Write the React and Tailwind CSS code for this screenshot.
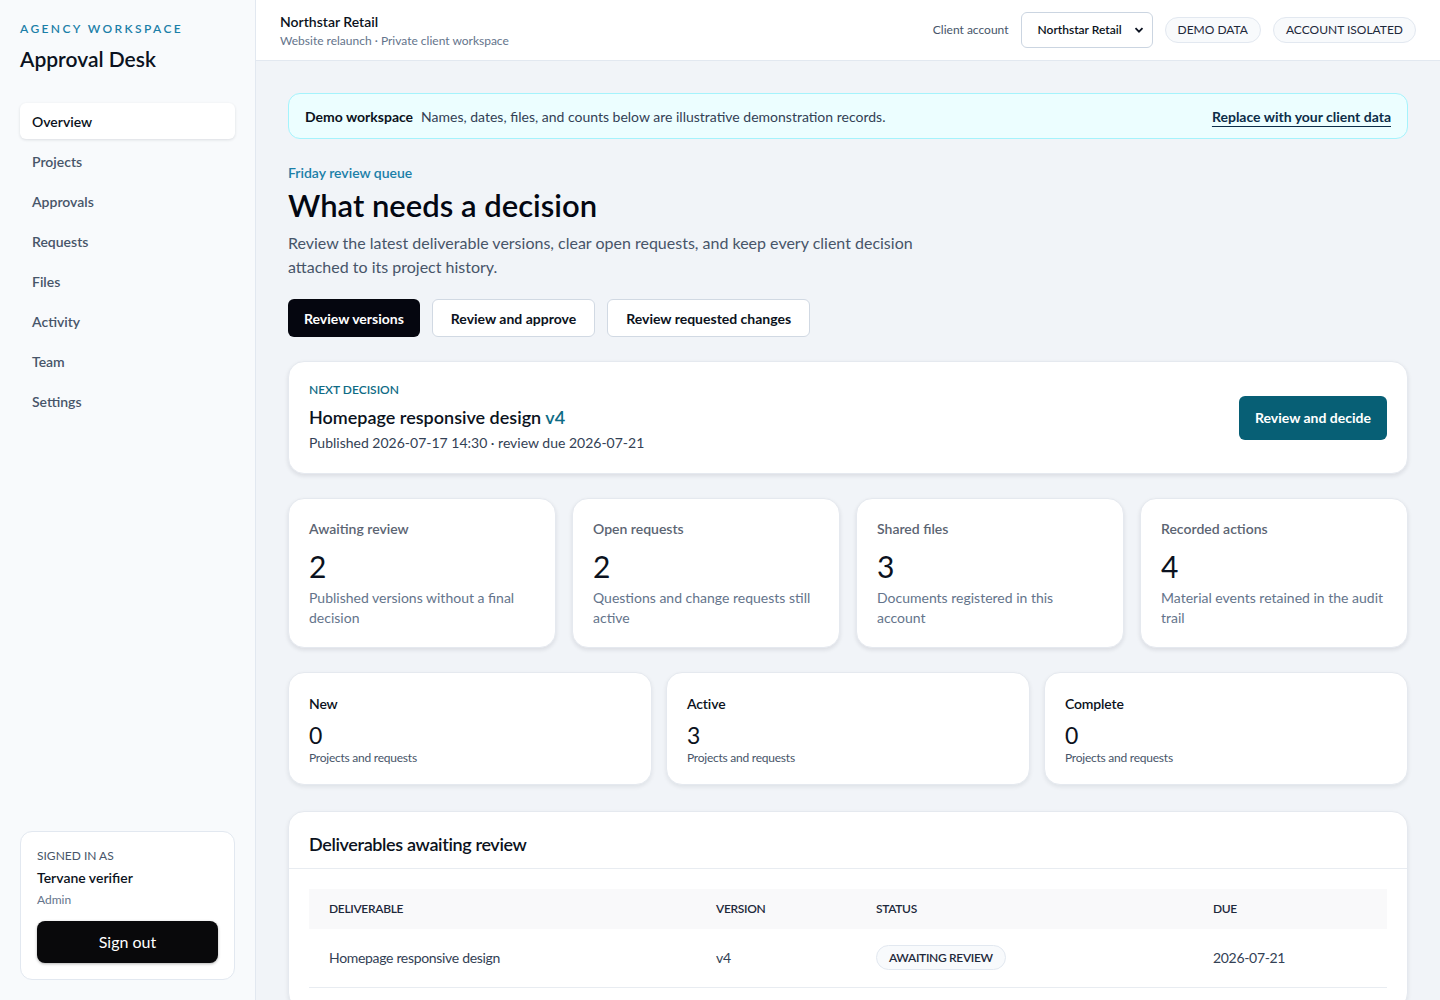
import React from 'react';

const navItems = ['Overview', 'Projects', 'Approvals', 'Requests', 'Files', 'Activity', 'Team', 'Settings'];

const stats = [
  { label: 'Awaiting review', value: '2', desc: 'Published versions without a final decision' },
  { label: 'Open requests', value: '2', desc: 'Questions and change requests still active' },
  { label: 'Shared files', value: '3', desc: 'Documents registered in this account' },
  { label: 'Recorded actions', value: '4', desc: 'Material events retained in the audit trail' },
];

const stages = [
  { label: 'New', value: '0' },
  { label: 'Active', value: '3' },
  { label: 'Complete', value: '0' },
];

const Sidebar = () => (
  <aside className="w-[256px] shrink-0 h-screen sticky top-0 bg-[#f8fafc] border-r border-[#e2e8f0] flex flex-col px-5 pt-5 pb-5">
    <div className="text-[12px] tracking-[0.2em] font-semibold text-[#1b7fa8]">AGENCY WORKSPACE</div>
    <div className="text-[21px] font-semibold text-[#0b1220] mt-[7px] leading-7">Approval Desk</div>

    {/* Nav */}
    <nav className="mt-[30px] flex flex-col gap-1">
      {navItems.map((item, i) => (
        <a
          key={item}
          className={`h-9 flex items-center px-3 rounded-md text-[14px] font-semibold ${
            i === 0 ? 'bg-white text-[#0b1220] shadow-[0_1px_3px_rgba(15,23,42,0.12)]' : 'text-[#475569]'
          }`}
        >
          {item}
        </a>
      ))}
    </nav>

    {/* Signed in card */}
    <div className="mt-auto bg-white border border-[#e2e8f0] rounded-xl px-4 pt-[14px] pb-4">
      <div className="text-[12px] text-[#475569] leading-5">SIGNED IN AS</div>
      <div className="text-[14px] font-semibold text-[#0b1220] mt-[2px] leading-5">Tervane verifier</div>
      <div className="text-[12px] text-[#64748b] mt-[2px] leading-5">Admin</div>
      <button className="mt-[11px] w-full h-[42px] bg-[#09090b] text-white rounded-lg text-[16px] shadow-[0_1px_3px_rgba(0,0,0,0.3)]">
        Sign out
      </button>
    </div>
  </aside>
);

const Header = () => (
  <header className="h-[61px] bg-white border-b border-[#e2e8f0] flex items-center justify-between pl-6 pr-6">
    <div>
      <div className="text-[14px] font-semibold text-[#0b1220] leading-5">Northstar Retail</div>
      <div className="text-[12px] text-[#64748b] leading-4 mt-[1px]">Website relaunch · Private client workspace</div>
    </div>
    <div className="flex items-center gap-3">
      <span className="text-[12px] text-[#475569]">Client account</span>
      <div className="h-[36px] w-[132px] border border-[#cbd5e1] rounded-md flex items-center justify-between pl-4 pr-2 text-[12px] font-semibold text-[#0b1220]">
        Northstar Retail
        <svg width="10" height="10" viewBox="0 0 10 10" className="ml-1">
          <path d="M1.5 3.2 5 6.7 8.5 3.2" fill="none" stroke="#0b1220" strokeWidth="1.8" />
        </svg>
      </div>
      <span className="h-[26px] px-3 flex items-center rounded-full border border-[#e2e8f0] bg-[#f8fafc] text-[12px] text-[#1e293b]">DEMO DATA</span>
      <span className="h-[26px] px-3 flex items-center rounded-full border border-[#e2e8f0] bg-[#f8fafc] text-[12px] text-[#1e293b]">ACCOUNT ISOLATED</span>
    </div>
  </header>
);

const App = () => {
  return (
    <div className="min-h-screen flex bg-[#f1f4f8] font-['Lato','Noto_Sans',sans-serif] text-[#0b1220]">
      <Sidebar />
      <div className="flex-1 min-w-0">
        <Header />
        <main className="px-8 pt-8 pb-8">
          {/* Demo banner */}
          <div className="h-[46px] bg-[#ecfeff] border border-[#a5f3fc] rounded-xl flex items-center justify-between px-4 text-[14px]">
            <div>
              <span className="font-bold text-[#0b1220]">Demo workspace</span>
              <span className="text-[#334155] ml-2">Names, dates, files, and counts below are illustrative demonstration records.</span>
            </div>
            <a className="font-bold text-[#0c2d48] underline underline-offset-4">Replace with your client data</a>
          </div>

          {/* Intro */}
          <div className="mt-[23px] text-[14px] font-semibold text-[#1b7fa8]">Friday review queue</div>
          <h1 className="mt-[4px] text-[31px] font-semibold leading-9 text-[#030712]">What needs a decision</h1>
          <p className="mt-[8px] max-w-[640px] text-[16px] leading-6 text-[#475569]">
            Review the latest deliverable versions, clear open requests, and keep every client decision attached to its project history.
          </p>
          <div className="mt-5 flex gap-3">
            <button className="h-[38px] px-4 bg-[#05060f] text-white rounded-md text-[14px] font-bold">Review versions</button>
            <button className="h-[38px] px-[18px] bg-white border border-[#d1d9e3] rounded-md text-[14px] font-bold">Review and approve</button>
            <button className="h-[38px] px-[18px] bg-white border border-[#d1d9e3] rounded-md text-[14px] font-bold">Review requested changes</button>
          </div>

          {/* Next decision */}
          <div className="mt-6 h-[113px] bg-white border border-[#e5e9ef] rounded-2xl shadow-[0_2px_4px_rgba(15,23,42,0.1)] flex items-center justify-between px-5">
            <div>
              <div className="text-[12px] font-semibold text-[#0e6b85] leading-4">NEXT DECISION</div>
              <div className="mt-[7px] text-[18px] font-semibold leading-6">
                Homepage responsive design <span className="text-[#0e6b85]">v4</span>
              </div>
              <div className="mt-[4px] text-[14px] text-[#334155] leading-5">Published 2026-07-17 14:30 · review due 2026-07-21</div>
            </div>
            <button className="h-[44px] px-4 bg-[#075f75] text-white rounded-md text-[14px] font-bold">Review and decide</button>
          </div>

          {/* Stats */}
          <div className="mt-6 grid grid-cols-4 gap-4">
            {stats.map((s) => (
              <div key={s.label} className="h-[150px] bg-white border border-[#e5e9ef] rounded-2xl shadow-[0_2px_4px_rgba(15,23,42,0.1)] px-5 pt-[20px]">
                <div className="text-[14px] font-semibold text-[#5b6472] leading-5">{s.label}</div>
                <div className="mt-[11px] text-[30px] leading-8">{s.value}</div>
                <div className="mt-[6px] text-[14px] text-[#64748b] leading-5">{s.desc}</div>
              </div>
            ))}
          </div>

          {/* Stages */}
          <div className="mt-6 grid grid-cols-3 gap-[14px]">
            {stages.map((s) => (
              <div key={s.label} className="h-[113px] bg-white border border-[#e5e9ef] rounded-2xl shadow-[0_2px_4px_rgba(15,23,42,0.08)] px-5 pt-[21px]">
                <div className="text-[14px] font-semibold leading-5 tracking-[-0.01em]">{s.label}</div>
                <div className="mt-[9px] text-[23px] leading-6">{s.value}</div>
                <div className="mt-[3px] text-[12px] text-[#475569] leading-4 tracking-[-0.02em]">Projects and requests</div>
              </div>
            ))}
          </div>

          {/* Deliverables table */}
          <div className="mt-[26px] bg-white border border-[#e5e9ef] rounded-2xl shadow-[0_2px_4px_rgba(15,23,42,0.08)]">
            <div className="h-[57px] flex items-center px-5 border-b border-[#e8ecf1]">
              <h2 className="text-[18px] font-semibold tracking-[-0.02em] mt-2">Deliverables awaiting review</h2>
            </div>
            <div className="p-5">
              <table className="w-full text-left tracking-[-0.02em]">
                <thead>
                  <tr className="bg-[#f9f9fa] h-10 text-[12px] font-semibold text-[#1e293b]">
                    <th className="pl-5 w-[387px] font-semibold">DELIVERABLE</th>
                    <th className="pl-5 w-[160px] font-semibold">VERSION</th>
                    <th className="pl-5 w-[337px] font-semibold">STATUS</th>
                    <th className="pl-5 font-semibold">DUE</th>
                  </tr>
                </thead>
                <tbody>
                  <tr className="h-[58px] border-b border-[#e8ecf1] text-[14px] text-[#334155]">
                    <td className="pl-5">Homepage responsive design</td>
                    <td className="pl-5">v4</td>
                    <td className="pl-5">
                      <span className="inline-flex items-center h-[25px] px-3 rounded-full border border-[#e2e8f0] bg-[#f8fafc] text-[12px] font-semibold text-[#1e293b]">
                        AWAITING REVIEW
                      </span>
                    </td>
                    <td className="pl-5">2026-07-21</td>
                  </tr>
                </tbody>
              </table>
            </div>
          </div>
        </main>
      </div>
    </div>
  );
};

export default App;
